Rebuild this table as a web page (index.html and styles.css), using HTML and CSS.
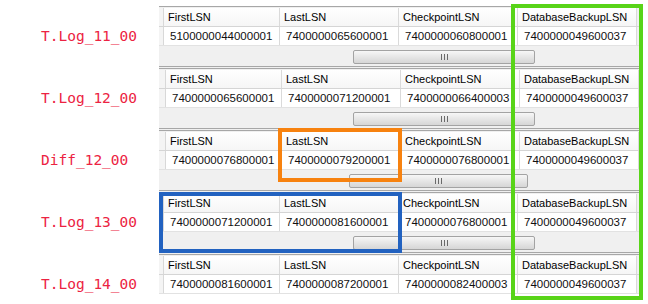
FILE: index.html
```html
<!DOCTYPE html>
<html>
<head>
<meta charset="utf-8">
<link rel="stylesheet" href="styles.css">
</head>
<body>
<div class="page">
  <div class="row">
    <div class="label">T.Log_11_00</div>
    <div class="grid">
      <div class="hdr"><span class="rh"></span><span class="c c1">FirstLSN</span><span class="c">LastLSN</span><span class="c">CheckpointLSN</span><span class="c">DatabaseBackupLSN</span></div>
      <div class="data"><span class="rh"></span><span class="c c1">5100000044000001</span><span class="c">7400000065600001</span><span class="c">7400000060800001</span><span class="c">7400000049600037</span></div>
      <div class="scroll"><div class="thumb"><svg width="7" height="6" viewBox="0 0 7 6"><path d="M0.5 0v6M3.5 0v6M6.5 0v6" stroke="#6a6a6a" stroke-width="1"/></svg></div></div>
    </div>
  </div>
  <div class="row">
    <div class="label">T.Log_12_00</div>
    <div class="grid wide">
      <div class="hdr"><span class="rh"></span><span class="c c1">FirstLSN</span><span class="c">LastLSN</span><span class="c">CheckpointLSN</span><span class="c">DatabaseBackupLSN</span></div>
      <div class="data"><span class="rh"></span><span class="c c1">7400000065600001</span><span class="c">7400000071200001</span><span class="c">7400000066400003</span><span class="c">7400000049600037</span></div>
      <div class="scroll"><div class="thumb"><svg width="7" height="6" viewBox="0 0 7 6"><path d="M0.5 0v6M3.5 0v6M6.5 0v6" stroke="#6a6a6a" stroke-width="1"/></svg></div></div>
    </div>
  </div>
  <div class="row">
    <div class="label">Diff_12_00</div>
    <div class="grid wide">
      <div class="hdr"><span class="rh"></span><span class="c c1">FirstLSN</span><span class="c">LastLSN</span><span class="c">CheckpointLSN</span><span class="c">DatabaseBackupLSN</span></div>
      <div class="data"><span class="rh"></span><span class="c c1">7400000076800001</span><span class="c">7400000079200001</span><span class="c">7400000076800001</span><span class="c">7400000049600037</span></div>
      <div class="scroll"><div class="thumb short"><svg width="7" height="6" viewBox="0 0 7 6"><path d="M0.5 0v6M3.5 0v6M6.5 0v6" stroke="#6a6a6a" stroke-width="1"/></svg></div></div>
    </div>
  </div>
  <div class="row">
    <div class="label">T.Log_13_00</div>
    <div class="grid">
      <div class="hdr"><span class="rh"></span><span class="c c1">FirstLSN</span><span class="c">LastLSN</span><span class="c">CheckpointLSN</span><span class="c">DatabaseBackupLSN</span></div>
      <div class="data"><span class="rh"></span><span class="c c1">7400000071200001</span><span class="c">7400000081600001</span><span class="c">7400000076800001</span><span class="c">7400000049600037</span></div>
      <div class="scroll"><div class="thumb"><svg width="7" height="6" viewBox="0 0 7 6"><path d="M0.5 0v6M3.5 0v6M6.5 0v6" stroke="#6a6a6a" stroke-width="1"/></svg></div></div>
    </div>
  </div>
  <div class="row last">
    <div class="label">T.Log_14_00</div>
    <div class="grid">
      <div class="hdr"><span class="rh"></span><span class="c c1">FirstLSN</span><span class="c">LastLSN</span><span class="c">CheckpointLSN</span><span class="c">DatabaseBackupLSN</span></div>
      <div class="data"><span class="rh"></span><span class="c c1">7400000081600001</span><span class="c">7400000087200001</span><span class="c">7400000082400003</span><span class="c">7400000049600037</span></div>
    </div>
  </div>

  <div class="box box-green"></div>
  <div class="box box-orange"></div>
  <div class="box box-blue"></div>
</div>
</body>
</html>
```

FILE: styles.css
```css
html, body {
  margin: 0;
  padding: 0;
  background: #ffffff;
}

.page {
  position: relative;
  width: 648px;
  height: 304px;
  padding-top: 6px;
  box-sizing: border-box;
  overflow: hidden;
  font-family: "Liberation Sans", Arial, sans-serif;
  color: #111;
}

.row {
  display: flex;
  height: 62px;
}

.row.last {
  height: auto;
}

.label {
  width: 159px;
  flex: none;
  box-sizing: border-box;
  padding-left: 41px;
  padding-top: 20px;
  line-height: 20px;
  font-family: "DejaVu Sans Mono", "Liberation Mono", monospace;
  font-size: 14.5px;
  color: #ec2342;
}

.grid {
  width: 482px;
  flex: none;
  align-self: flex-start;
  border-top: 1px solid #a7a7a7;
  padding-top: 1px;
  background: #f0f0f0;
}

.hdr, .data {
  display: flex;
  height: 18px;
}

.hdr {
  border-bottom: 1px solid #d5d5d5;
  font-size: 11px;
}

.data {
  border-bottom: 1px solid #e2e2e2;
  font-size: 11.5px;
}

.rh {
  width: 4px;
  flex: none;
  background: #f4f4f4;
  border-right: 1px solid #d8d8d8;
}

.wide .rh {
  width: 6px;
}

.c {
  box-sizing: border-box;
  width: 119px;
  flex: none;
  line-height: 18px;
  border-right: 1px solid #dadada;
  white-space: nowrap;
  overflow: hidden;
}

.c1 {
  width: 116px;
}

.hdr .c {
  padding-left: 4px;
  background: linear-gradient(#ffffff, #f6f6f6);
  color: #000;
}

.data .c {
  padding-left: 6px;
  background: #ffffff;
  color: #101010;
}

.scroll {
  height: 20px;
  border-bottom: 1px solid #a7a7a7;
  margin-bottom: 1px;
  display: flex;
  align-items: flex-start;
}

.thumb {
  box-sizing: border-box;
  margin-left: 194px;
  margin-top: 4px;
  width: 182px;
  height: 14px;
  border: 1px solid #a3a3a3;
  border-radius: 2px;
  background: linear-gradient(#f7f7f7, #e6e6e6 50%, #d6d6d6);
  display: flex;
  align-items: center;
  justify-content: center;
}

.thumb.short {
  margin-left: 190px;
  width: 179px;
}

.box {
  position: absolute;
  box-sizing: border-box;
  border-style: solid;
  border-width: 4px;
}

.box-green {
  left: 511px;
  top: 4px;
  width: 132px;
  height: 296px;
  border-color: #58d418;
}

.box-orange {
  left: 278px;
  top: 128px;
  width: 124px;
  height: 54px;
  border-color: #f7820f;
}

.box-blue {
  left: 159px;
  top: 192px;
  width: 243px;
  height: 61px;
  border-color: #2262c0;
}
```
